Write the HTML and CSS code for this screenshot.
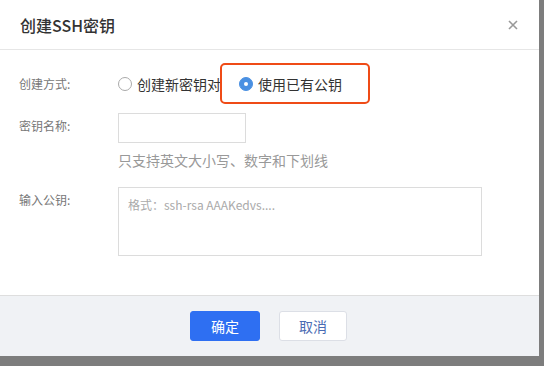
FILE: index.html
```html
<!DOCTYPE html>
<html lang="zh">
<head>
  <meta charset="UTF-8">
  <meta name="viewport" content="width=device-width, initial-scale=1.0">
  <title>创建SSH密钥</title>
  <link rel="stylesheet" href="styles.css">
</head>
<body>
  <div class="dialog">
    <div class="dialog-header">
      <span class="dialog-title">创建SSH密钥</span>
      <span class="close-btn">
        <svg width="10" height="10" viewBox="0 0 10 10"><path d="M1 1L9 9M9 1L1 9" stroke="#999" stroke-width="1.6" fill="none"/></svg>
      </span>
    </div>

    <div class="dialog-body">
      <div class="form-row row-mode">
        <div class="form-label">创建方式:</div>
        <div class="radio-group">
          <span class="radio"><i class="radio-dot"></i>创建新密钥对</span>
          <span class="radio checked"><i class="radio-dot"></i>使用已有公钥</span>
        </div>
      </div>

      <div class="form-row">
        <div class="form-label">密钥名称:</div>
        <div class="form-field">
          <div class="input"></div>
          <div class="hint">只支持英文大小写、数字和下划线</div>
        </div>
      </div>

      <div class="form-row">
        <div class="form-label">输入公钥:</div>
        <div class="textarea">格式：ssh-rsa AAAKedvs....</div>
      </div>
    </div>

    <div class="dialog-footer">
      <button class="btn btn-primary">确定</button>
      <button class="btn btn-default">取消</button>
    </div>

    <!-- 标注框 -->
    <div class="highlight"></div>
  </div>
</body>
</html>
```

FILE: styles.css
```css
body {
  margin: 0;
  background: #7d7d7d;
  font-family: "Noto Sans CJK SC", "Noto Sans", sans-serif;
  color: #333;
}

.dialog {
  position: relative;
  width: 539px;
  height: 356px;
  background: #fff;
  display: flex;
  flex-direction: column;
}

/* 头部 */
.dialog-header {
  height: 49px;
  padding: 0 21px 0 20px;
  border-bottom: 1px solid #e6e6e6;
  display: flex;
  align-items: center;
  justify-content: space-between;
}

.dialog-title {
  font-size: 16px;
  font-weight: 500;
  color: #333;
}

.close-btn {
  display: flex;
}

/* 表单 */
.dialog-body {
  flex: 1;
  padding: 22px 0 0 19px;
}

.form-row {
  display: flex;
  align-items: flex-start;
  margin-bottom: 17px;
}

.form-row.row-mode {
  align-items: center;
  height: 24px;
}

.form-label {
  width: 99px;
  font-size: 12px;
  line-height: 18px;
  color: #777;
  padding-top: 4px;
}

.row-mode .form-label {
  padding-top: 0;
}

.radio-group {
  display: flex;
  align-items: center;
  gap: 18px;
  font-size: 14px;
  color: #333;
}

.radio {
  display: flex;
  align-items: center;
  gap: 5px;
}

.radio-dot {
  width: 12px;
  height: 12px;
  border: 1px solid #aaa;
  border-radius: 50%;
  background: #fff;
  position: relative;
}

.radio.checked .radio-dot {
  border-color: #4a90e2;
  background: #4a90e2;
}

.radio.checked .radio-dot::after {
  content: "";
  position: absolute;
  width: 4px;
  height: 4px;
  border-radius: 50%;
  background: #fff;
  left: 4px;
  top: 4px;
}

.form-field {
  display: flex;
  flex-direction: column;
}

.input {
  width: 126px;
  height: 28px;
  border: 1px solid #dcdcdc;
}

.hint {
  margin-top: 7px;
  font-size: 14px;
  line-height: 20px;
  color: #999;
}

.textarea {
  width: 344px;
  height: 47px;
  border: 1px solid #dcdcdc;
  padding: 10px 9px;
  font-size: 12px;
  line-height: 14px;
  color: #aaa;
}

/* 底部按钮 */
.dialog-footer {
  height: 60px;
  border-top: 1px solid #dedede;
  background: #f0f2f5;
  display: flex;
  align-items: center;
  justify-content: center;
  gap: 19px;
  padding-right: 2px;
}

.btn {
  height: 30px;
  border-radius: 3px;
  font-family: inherit;
  font-size: 14px;
  cursor: pointer;
}

.btn-primary {
  width: 70px;
  background: #2e6ff2;
  border: 1px solid #2e6ff2;
  color: #fff;
}

.btn-default {
  width: 68px;
  background: #fff;
  border: 1px solid #dcdfe6;
  color: #4a6cb3;
}

.highlight {
  position: absolute;
  left: 220px;
  top: 63px;
  width: 146px;
  height: 37px;
  border: 2px solid #ef4b17;
  border-radius: 5px;
}
```
